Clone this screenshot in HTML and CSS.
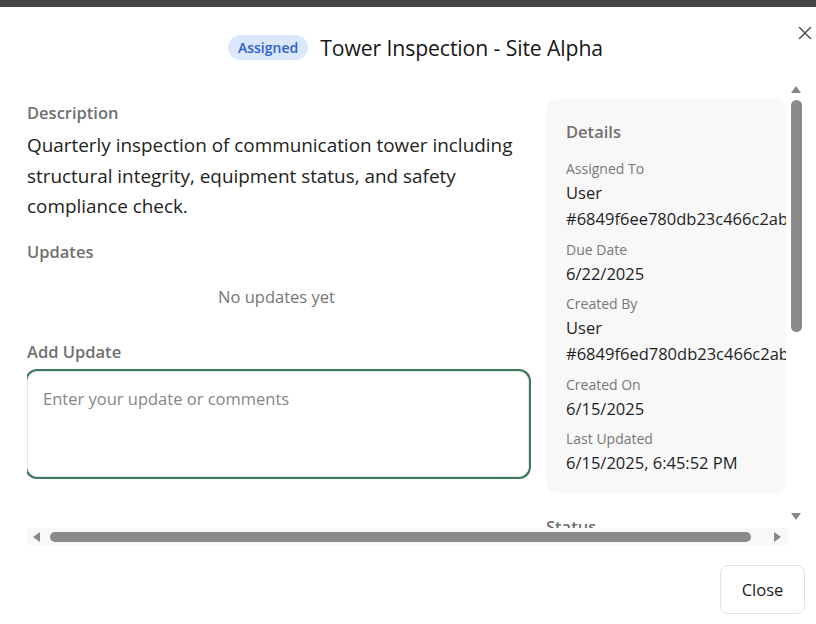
FILE: index.html
```html
<!DOCTYPE html>
<html lang="en">
<head>
<meta charset="utf-8">
<title>Tower Inspection - Site Alpha</title>
<link rel="stylesheet" href="styles.css">
</head>
<body>
<div class="backdrop-strip"></div>
<div class="modal">
  <header class="modal-header">
    <span class="badge">Assigned</span>
    <h1 class="title">Tower Inspection - Site Alpha</h1>
    <button class="close-x" aria-label="Close">
      <svg width="14" height="14" viewBox="0 0 14 14"><path d="M1.5 1.5 L12.5 12.5 M12.5 1.5 L1.5 12.5" stroke="#555" stroke-width="1.6" stroke-linecap="round" fill="none"/></svg>
    </button>
  </header>

  <div class="scroll-frame">
    <div class="viewport">
      <div class="content">
        <div class="main-col">
          <div class="section-label">Description</div>
          <p class="description">Quarterly inspection of communication tower including structural integrity, equipment status, and safety compliance check.</p>

          <div class="section-label updates-label">Updates</div>
          <div class="empty">No updates yet</div>

          <div class="section-label">Add Update</div>
          <textarea class="update-input" placeholder="Enter your update or comments"></textarea>
        </div>
        <div class="side-col">
          <aside class="details">
            <div class="section-label details-title">Details</div>
            <div class="field">
              <div class="field-label">Assigned To</div>
              <div class="field-value">User #6849f6ee780db23c466c2abc</div>
            </div>
            <div class="field">
              <div class="field-label">Due Date</div>
              <div class="field-value">6/22/2025</div>
            </div>
            <div class="field">
              <div class="field-label">Created By</div>
              <div class="field-value">User #6849f6ed780db23c466c2abc</div>
            </div>
            <div class="field">
              <div class="field-label">Created On</div>
              <div class="field-value">6/15/2025</div>
            </div>
            <div class="field">
              <div class="field-label">Last Updated</div>
              <div class="field-value">6/15/2025, 6:45:52 PM</div>
            </div>
          </aside>
          <div class="section-label status-label">Status</div>
        </div>
      </div>
    </div>
    <div class="vbar">
      <span class="arrow arrow-up"></span>
      <span class="vthumb"></span>
      <span class="vspacer"></span>
      <span class="arrow arrow-down"></span>
    </div>
    <div class="hbar">
      <span class="harrow-box"><span class="arrow arrow-left"></span></span>
      <span class="hthumb"></span>
      <span class="harrow-box"><span class="arrow arrow-right"></span></span>
    </div>
    <div class="corner"></div>
  </div>

  <footer class="modal-footer">
    <button class="btn">Close</button>
  </footer>
</div>
</body>
</html>
```
FILE: styles.css
```css
html, body {
  margin: 0;
  padding: 0;
  background: #ffffff;
}
body {
  font-family: "Open Sans", "Noto Sans", sans-serif;
  color: #1f1f1f;
  width: 816px;
  height: 624px;
  overflow: hidden;
}
.backdrop-strip {
  height: 7px;
  background: #444444;
}
.modal {
  position: relative;
  background: #ffffff;
  padding: 0 12px 10px 27px;
}
.modal-header {
  display: flex;
  align-items: center;
  justify-content: center;
  gap: 12px;
  height: 32px;
  padding-top: 24px;
  margin-bottom: 17px;
}
.badge {
  display: inline-flex;
  align-items: center;
  height: 25px;
  padding: 0 10px;
  border-radius: 13px;
  background: #dbe8fb;
  color: #2f5fcf;
  font-size: 14px;
  font-weight: 600;
}
.title {
  margin: 0;
  font-size: 21.2px;
  font-weight: 500;
  color: #161616;
  letter-spacing: -0.1px;
}
.close-x {
  position: absolute;
  top: 14px;
  right: -1px;
  width: 24px;
  height: 24px;
  padding: 0;
  border: 0;
  background: transparent;
  display: flex;
  align-items: center;
  justify-content: center;
}
.scroll-frame {
  display: grid;
  grid-template-columns: 761px 16px;
  grid-template-rows: 448px 17px;
}
.viewport {
  overflow: hidden;
  position: relative;
}
.content {
  display: flex;
  gap: 16px;
  padding-top: 21px;
  width: 1000px;
}
.main-col {
  width: 503px;
  flex: none;
  display: flex;
  flex-direction: column;
}
.section-label {
  font-size: 16.5px;
  line-height: 24px;
  font-weight: 600;
  color: #707070;
}
.description {
  margin: 5px 0 0;
  font-size: 18.9px;
  line-height: 30.5px;
  color: #222222;
}
.updates-label {
  margin-top: 18px;
}
.empty {
  text-align: center;
  font-size: 16.5px;
  line-height: 24px;
  color: #767676;
  margin: 21px 4px 31px 0;
}
.update-input {
  margin-top: 7px;
  display: block;
  box-sizing: border-box;
  width: 502px;
  height: 106px;
  padding: 14px 15px;
  border: 1px solid #e2e6ea;
  border-radius: 10px;
  box-shadow: 0 0 0 2px #3a7a58;
  font-family: inherit;
  font-size: 16.5px;
  line-height: 26px;
  color: #222;
  resize: none;
  outline: none;
  background: #fff;
}
.update-input::placeholder {
  color: #8a8582;
}
.side-col {
  width: 320px;
  flex: none;
  margin-top: -2px;
}
.details {
  width: 220px;
  background: #f8f8f8;
  border-radius: 12px;
  padding: 21px 0 17px 20px;
  overflow: hidden;
}
.details-title {
  margin-bottom: 14px;
}
.field + .field {
  margin-top: 6.5px;
}
.field-label {
  font-size: 14px;
  line-height: 22px;
  color: #777777;
}
.field-value {
  font-size: 16.5px;
  line-height: 26px;
  color: #1f1f1f;
  white-space: normal;
}
.status-label {
  margin-top: 22px;
}
.vbar {
  display: flex;
  flex-direction: column;
  align-items: center;
  background: #ffffff;
  padding-bottom: 2px;
  box-sizing: border-box;
}
.arrow {
  display: block;
  width: 0;
  height: 0;
  border-style: solid;
}
.arrow-up {
  margin-top: 6px;
  border-width: 0 5.5px 7px 5.5px;
  border-color: transparent transparent #888888 transparent;
}
.arrow-down {
  margin-bottom: 6px;
  border-width: 7px 5.5px 0 5.5px;
  border-color: #888888 transparent transparent transparent;
}
.vthumb {
  margin-top: 7px;
  width: 11px;
  height: 232px;
  border-radius: 6px;
  background: #8a8a8a;
}
.vspacer {
  flex: 1;
}
.hbar {
  display: flex;
  align-items: center;
  background: #f8f8f8;
}
.harrow-box {
  width: 19px;
  height: 17px;
  display: flex;
  align-items: center;
  justify-content: center;
  flex: none;
}
.hbar .harrow-box:first-child {
  margin-right: 4px;
}
.hbar .harrow-box:last-child {
  margin-left: 17px;
}
.arrow-left {
  border-width: 5.5px 7px 5.5px 0;
  border-color: transparent #888888 transparent transparent;
}
.arrow-right {
  border-width: 5.5px 0 5.5px 7px;
  border-color: transparent transparent transparent #888888;
}
.hthumb {
  width: 701px;
  height: 10px;
  border-radius: 5px;
  background: #8a8a8a;
  flex: none;
}
.corner {
  background: #ffffff;
}
.modal-footer {
  display: flex;
  justify-content: flex-end;
  padding-top: 20px;
  margin-right: -1px;
}
.btn {
  width: 85px;
  height: 49px;
  border: 1px solid #dde3ec;
  border-radius: 8px;
  background: #ffffff;
  font-family: inherit;
  font-size: 16.5px;
  color: #1b1b1b;
}
```
